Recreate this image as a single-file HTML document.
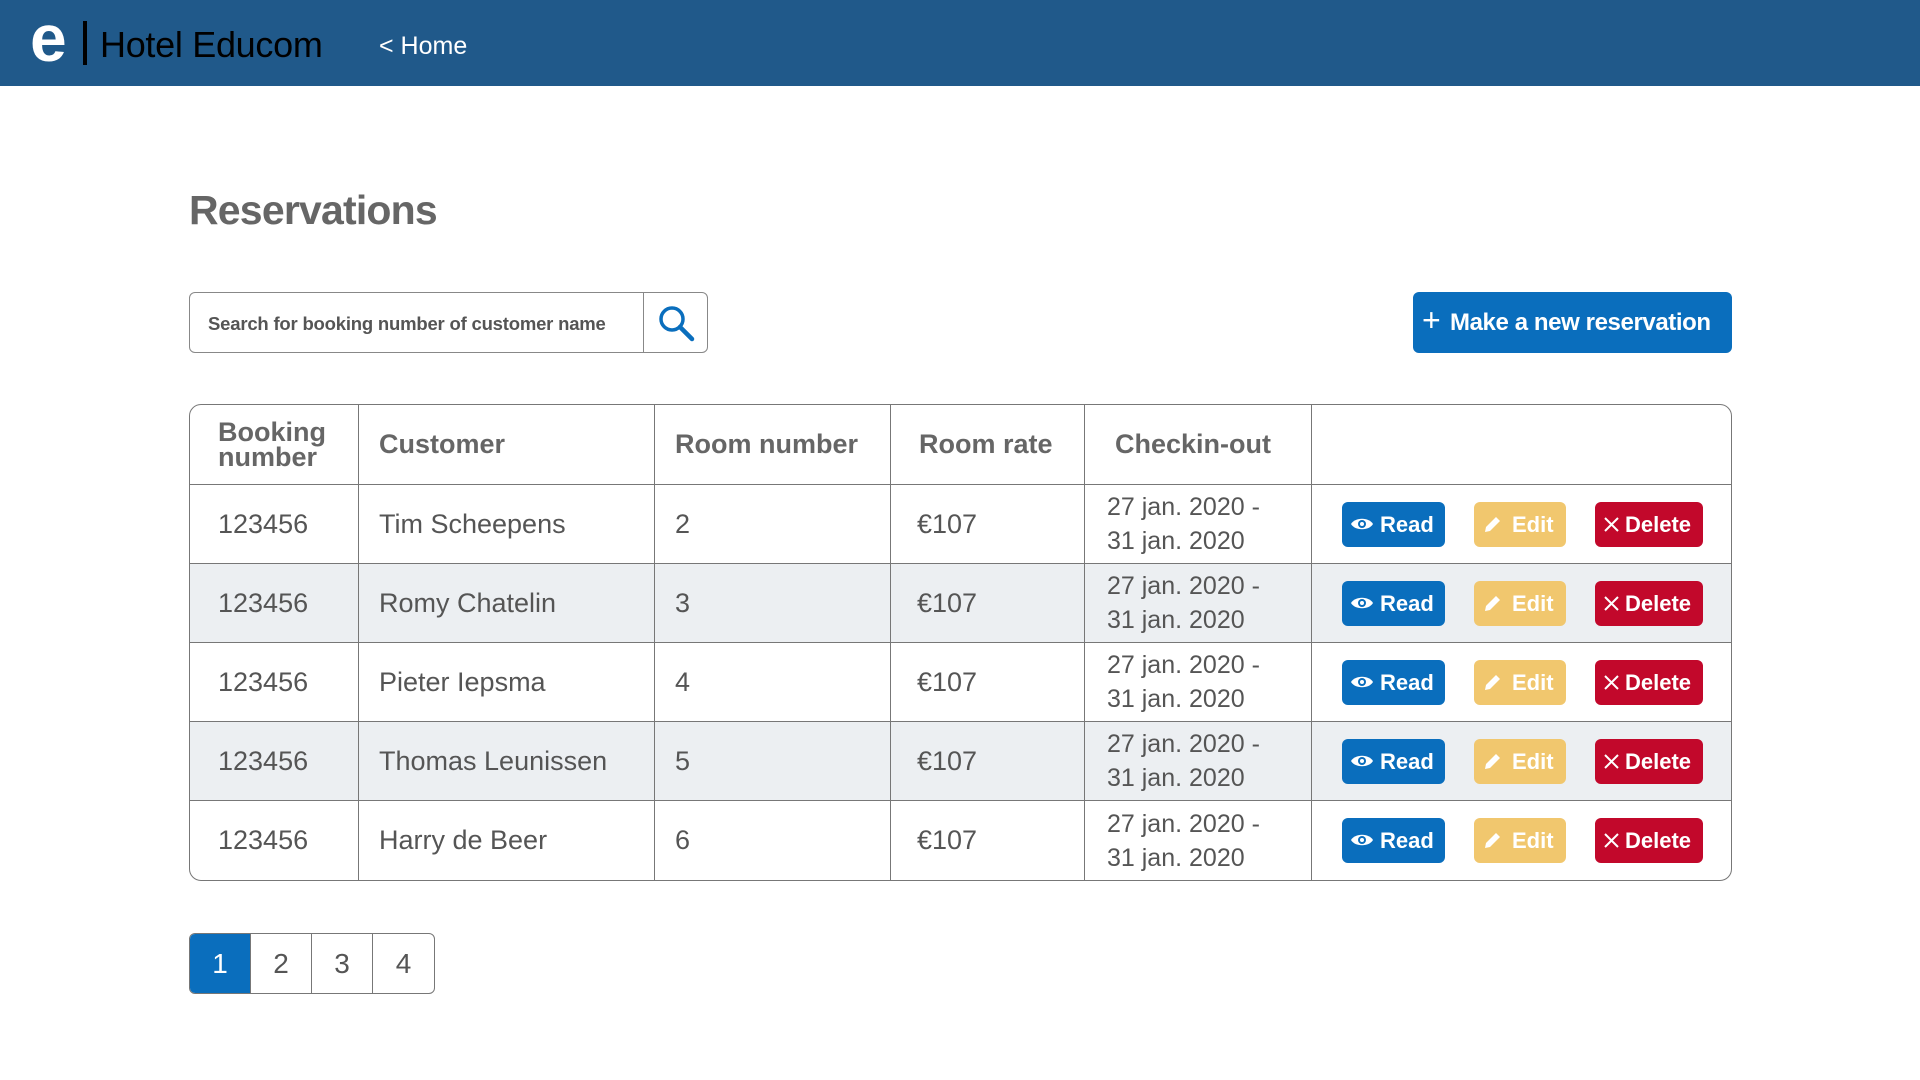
<!DOCTYPE html>
<html><head><meta charset="utf-8"><style>
*{box-sizing:border-box;margin:0;padding:0}
body{width:1920px;height:1080px;background:#fff;font-family:"Liberation Sans",sans-serif;color:#555;position:relative;overflow:hidden}
.hdr{position:absolute;left:0;top:0;width:1920px;height:86px;background:#20598a}
.logo{position:absolute;left:30px;top:5px;font-size:66px;font-weight:bold;color:#fff;line-height:66px;letter-spacing:-2px}
.brand{position:absolute;left:100px;top:22px;font-size:36px;color:#000;line-height:46px;letter-spacing:-0.3px}
.bar{position:absolute;left:83px;top:21px;width:4px;height:44px;background:#000}
.home{position:absolute;left:379px;top:32px;color:#fff;font-size:25px}
h1{position:absolute;left:189px;top:187px;font-size:41px;font-weight:bold;color:#666;letter-spacing:-0.8px}
.search{position:absolute;left:189px;top:292px;width:519px;height:61px;border:1px solid #888;border-radius:6px}
.search span{position:absolute;left:18px;top:20px;font-size:18.5px;font-weight:bold;color:#555;white-space:nowrap;letter-spacing:-0.2px}
.search .div{position:absolute;left:453px;top:0;width:1px;height:59px;background:#888}
.search svg{position:absolute;left:466px;top:10px}
.newb{position:absolute;left:1413px;top:292px;width:319px;height:61px;background:#0a6ebd;border-radius:6px;color:#fff;font-size:24px;font-weight:bold;line-height:61px;padding-left:37px;white-space:nowrap;letter-spacing:-0.4px}
.newb:before{content:"+";position:absolute;left:9px;top:-2px;font-weight:normal;font-size:32px}
table{position:absolute;left:189px;top:404px;width:1543px;border-collapse:separate;border-spacing:0;border:1px solid #777;border-radius:12px;overflow:hidden}
td,th{border-right:1px solid #777;border-bottom:1px solid #777;height:79px;font-size:27px;text-align:left;padding-left:20px;white-space:nowrap}
th{font-size:27px;color:#666;height:80px}
tr td:last-child,tr th:last-child{border-right:none}
tr:last-child td{border-bottom:none}
tr.g td{background:#eceff2}
td.d{font-size:25px;line-height:34px;padding-left:22px}
.b{display:inline-block;height:45px;line-height:45px;border-radius:6px;color:#fff;font-size:22px;font-weight:bold;vertical-align:middle;position:relative;white-space:nowrap}
.r{background:#0a6ebd;width:103px;margin-left:10px;padding-left:38px}
.e{background:#f1c76e;width:92px;margin-left:29px;padding-left:38px}
.x{background:#c2082b;width:108px;margin-left:29px;padding-left:30px}
.pg{position:absolute;left:189px;top:933px;height:61px;border:1px solid #777;border-radius:6px;overflow:hidden;display:flex}
.pg div{width:61px;height:59px;line-height:59px;text-align:center;font-size:28px;border-right:1px solid #777}
.pg div:last-child{border-right:none}
.pg .a{background:#0a6ebd;color:#fff}
</style></head><body>
<div class="hdr">
<div class="logo">e</div>
<div class="bar"></div><div class="brand">Hotel Educom</div>
<div class="home">&lt; Home</div></div>
<h1>Reservations</h1>
<div class="search"><span>Search for booking number of customer name</span><div class="div"></div>
<svg width="40" height="40" viewBox="0 0 40 40"><circle cx="16" cy="16" r="11" fill="none" stroke="#0a6ebd" stroke-width="3.5"/><path d="M24 24 L36 36" stroke="#0a6ebd" stroke-width="4.5" stroke-linecap="round"/></svg></div>
<div class="newb">Make a new reservation</div>
<table>
<tr><th style="width:169px;line-height:25px;padding-left:28px">Booking<br>number</th><th style="width:296px">Customer</th><th style="width:236px">Room number</th><th style="width:194px;padding-left:28px">Room rate</th><th style="width:227px;padding-left:30px">Checkin-out</th><th></th></tr>
</table>
<div class="pg"><div class="a">1</div><div>2</div><div>3</div><div>4</div></div>
<script>
var n=[["Tim Scheepens",2],["Romy Chatelin",3],["Pieter Iepsma",4],["Thomas Leunissen",5],["Harry de Beer",6]];
var eye='<svg style="position:absolute;left:8px;top:14px" width="24" height="16" viewBox="0 0 24 16"><path d="M1 8C5 1 19 1 23 8C19 15 5 15 1 8Z" fill="#fff"/><circle cx="12" cy="8" r="4" fill="#0a6ebd"/><circle cx="12" cy="8" r="2" fill="#fff"/></svg>';
var pen='<svg style="position:absolute;left:9px;top:12px" width="20" height="20" viewBox="0 0 20 20"><path d="M2 18L3 13L13 3L17 7L7 17Z" fill="#fff"/></svg>';
var xx='<svg style="position:absolute;left:9px;top:15px" width="15" height="15" viewBox="0 0 15 15"><path d="M1 1L14 14M14 1L1 14" stroke="#fff" stroke-width="2"/></svg>';
var t=document.querySelector('table'),h='';
n.forEach(function(r,i){h+='<tr'+(i%2?' class="g"':'')+'><td style="padding-left:28px">123456</td><td>'+r[0]+'</td><td>'+r[1]+'</td><td style="padding-left:26px">€107</td><td class="d">27 jan. 2020 -<br>31 jan. 2020</td><td style="padding-left:20px"><span class="b r">'+eye+'Read</span><span class="b e">'+pen+'Edit</span><span class="b x">'+xx+'Delete</span></td></tr>';});
t.insertAdjacentHTML('beforeend',h);
</script>
</body></html>
